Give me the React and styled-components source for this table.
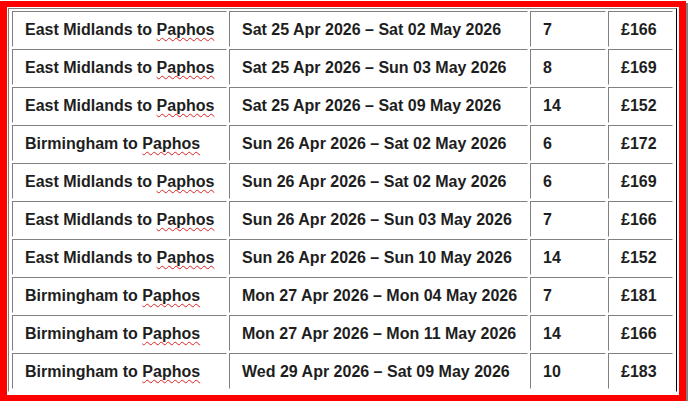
import React from 'react';
import styled, { createGlobalStyle } from 'styled-components';

const GlobalStyle = createGlobalStyle`
  html, body {
    margin: 0;
    padding: 0;
    background: #fff;
  }
  body {
    padding-top: 1px;
    font-family: "Liberation Sans", Arial, sans-serif;
  }
`;

const Frame = styled.div`
  width: 671px;
  border-style: solid;
  border-color: #ff0000;
  border-width: 6px 7px 6px 7px;
  background: #fff;
  padding: 1px 0 3px 1px;
  box-shadow: 3px 2px 0 #808080;
`;

const Table = styled.table`
  border-collapse: separate;
  border-spacing: 2px;
  padding: 0 1px;
  border-style: solid;
  border-width: 1px;
  border-color: #808080 #000 transparent #808080;
  table-layout: fixed;
  width: 669px;
`;

const Cell = styled.td`
  box-sizing: border-box;
  width: ${p => p.$w}px;
  height: 36px;
  padding: 2px 4px 0 12px;
  border-style: solid;
  border-width: 1px;
  border-color: #808080 transparent transparent #808080;
  font-size: 16px;
  font-weight: bold;
  color: #1e1e1e;
  white-space: nowrap;
  vertical-align: middle;
`;

const Typo = styled.span`
  text-decoration: underline wavy #e02020;
  text-decoration-thickness: 1px;
  text-underline-offset: 2px;
  text-decoration-skip-ink: none;
`;

const widths = [215, 299, 76, 65];

const trips = [
  ['East Midlands', 'Sat 25 Apr 2026', 'Sat 02 May 2026', 7, 166],
  ['East Midlands', 'Sat 25 Apr 2026', 'Sun 03 May 2026', 8, 169],
  ['East Midlands', 'Sat 25 Apr 2026', 'Sat 09 May 2026', 14, 152],
  ['Birmingham', 'Sun 26 Apr 2026', 'Sat 02 May 2026', 6, 172],
  ['East Midlands', 'Sun 26 Apr 2026', 'Sat 02 May 2026', 6, 169],
  ['East Midlands', 'Sun 26 Apr 2026', 'Sun 03 May 2026', 7, 166],
  ['East Midlands', 'Sun 26 Apr 2026', 'Sun 10 May 2026', 14, 152],
  ['Birmingham', 'Mon 27 Apr 2026', 'Mon 04 May 2026', 7, 181],
  ['Birmingham', 'Mon 27 Apr 2026', 'Mon 11 May 2026', 14, 166],
  ['Birmingham', 'Wed 29 Apr 2026', 'Sat 09 May 2026', 10, 183],
];

export default function App() {
  return (
    <>
      <GlobalStyle />
      <Frame>
        <Table>
          <tbody>
            {trips.map(([from, out, back, nights, price], i) => (
              <tr key={i}>
                <Cell $w={widths[0]}>{from} to <Typo>Paphos</Typo></Cell>
                <Cell $w={widths[1]}>{out} – {back}</Cell>
                <Cell $w={widths[2]}>{nights}</Cell>
                <Cell $w={widths[3]}>£{price}</Cell>
              </tr>
            ))}
          </tbody>
        </Table>
      </Frame>
    </>
  );
}
